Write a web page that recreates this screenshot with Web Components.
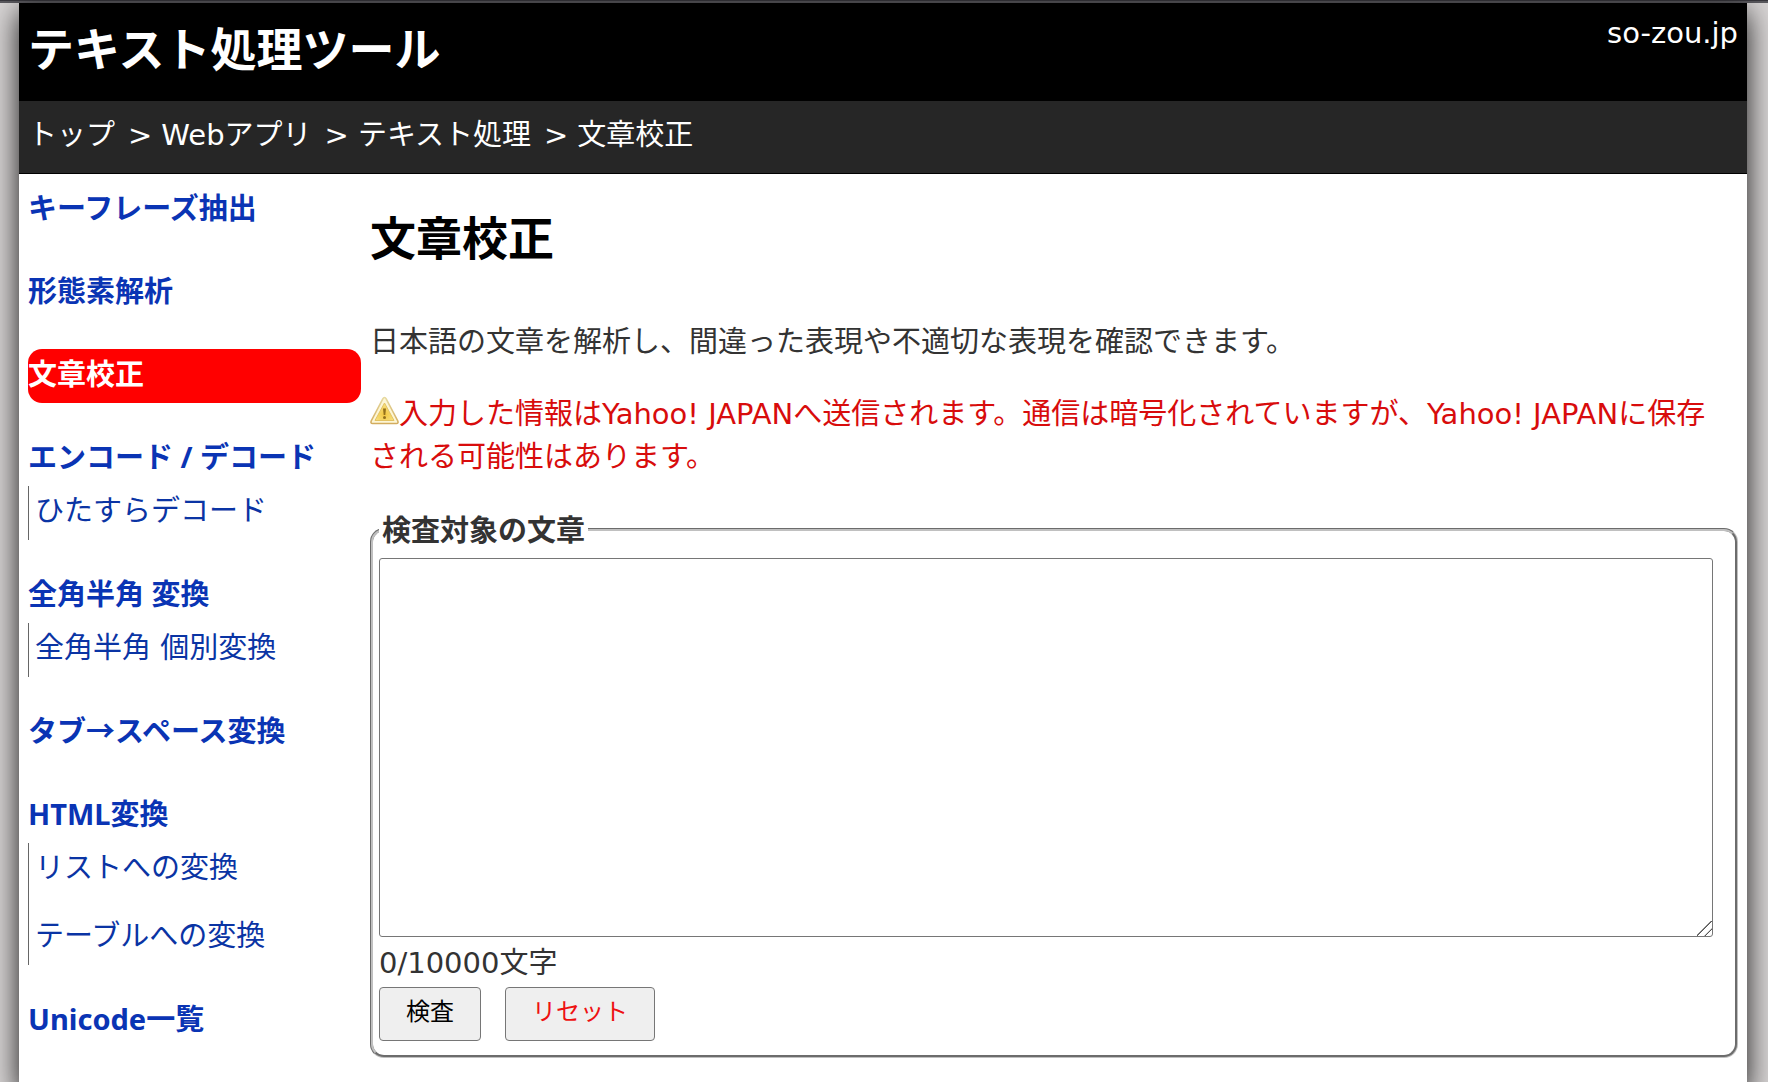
<!DOCTYPE html>
<html lang="ja">
<head>
<meta charset="utf-8">
<meta name="viewport" content="width=device-width, initial-scale=1">
<title>文章校正 - テキスト処理ツール</title>
<style>
  :root {
    --sans: "DejaVu Sans", "Noto Sans CJK JP", sans-serif;
    --strong: "Noto Sans", "Noto Sans CJK JP", sans-serif;
  }
  body {
    margin: 0;
    background: #d8d5d5;
    color: #333;
    font: 29px/43px var(--sans);
    overflow: hidden;
  }
</style>
</head>
<body>
<app-page>
  <site-header slot="header" home="so-zou.jp">テキスト処理ツール</site-header>
  <bread-crumb slot="header">
    <a href="#top">トップ</a>
    <a href="#web">Webアプリ</a>
    <a href="#text">テキスト処理</a>
    <a href="#proof">文章校正</a>
  </bread-crumb>
  <side-nav slot="side">
    <nav-group label="キーフレーズ抽出"></nav-group>
    <nav-group label="形態素解析"></nav-group>
    <nav-group label="文章校正" current></nav-group>
    <nav-group label="エンコード / デコード"><a href="#decode">ひたすらデコード</a></nav-group>
    <nav-group label="全角半角 変換"><a href="#width">全角半角 個別変換</a></nav-group>
    <nav-group label="タブ→スペース変換"></nav-group>
    <nav-group label="HTML変換"><a href="#list">リストへの変換</a><a href="#table">テーブルへの変換</a></nav-group>
    <nav-group label="Unicode一覧"></nav-group>
  </side-nav>
  <page-article heading="文章校正">
    <p>日本語の文章を解析し、間違った表現や不適切な表現を確認できます。</p>
    <warning-note>入力した情報はYahoo! JAPANへ送信されます。通信は暗号化されていますが、Yahoo! JAPANに保存される可能性はあります。</warning-note>
    <proof-form legend="検査対象の文章" max="10000"></proof-form>
  </page-article>
</app-page>

<script>
class Base extends HTMLElement {
  constructor() {
    super();
    this.attachShadow({ mode: 'open' });
  }
  connectedCallback() {
    this.shadowRoot.innerHTML = '<style>*{box-sizing:border-box}' + this.css() + '</style>' + this.html();
    this.ready();
  }
  ready() {}
}

customElements.define('app-page', class extends Base {
  css() { return `
    :host { display: block; border-top: 3px solid #5b5a5f; }
    .strip { height: 1px; margin-top: -3px; margin-bottom: 2px; background: #38373d; }
    .sheet { margin: 0 21px 0 19px; min-height: 100vh; background: #fff; box-shadow: 0 9px 28px rgba(0, 0, 0, .9); }
    .cols { display: flex; padding: 9px 9px 29px; gap: 9px; }
    .side { flex: 0 0 333px; }
    .main { flex: 1; min-width: 0; }`; }
  html() { return `<div class="strip"></div>
    <div class="sheet"><slot name="header"></slot>
    <div class="cols"><div class="side"><slot name="side"></slot></div><main class="main"><slot></slot></main></div></div>`; }
});

customElements.define('site-header', class extends Base {
  css() { return `
    :host { display: block; background: #000; }
    header { display: flex; justify-content: space-between; align-items: flex-start; height: 98px; padding: 9px 9px 0; }
    a { color: #fff; text-decoration: none; }
    .title { font: bold 46px/72px var(--strong); }`; }
  html() { return `<header><a class="title" href="#home"><slot></slot></a><a href="#site">${this.getAttribute('home')}</a></header>`; }
});

customElements.define('bread-crumb', class extends Base {
  css() { return `
    :host { display: block; background: #262626; border-bottom: 1px solid #000; color: #fff; }
    ol { display: flex; margin: 0; padding: 13px 9px 16px; list-style: none; }
    li + li::before { content: ">"; margin: 0 9px 0 13px; }
    ::slotted(a) { color: #fff; text-decoration: none; }`; }
  html() {
    return '<nav aria-label="パンくず"><ol>' + [...this.querySelectorAll('a')].map((a, i) => {
      a.slot = 'c' + i;
      return `<li><slot name="c${i}"></slot></li>`;
    }).join('') + '</ol></nav>';
  }
});

customElements.define('side-nav', class extends Base {
  css() { return `:host { display: block; } nav { display: flex; flex-direction: column; gap: 29px; }`; }
  html() { return `<nav><slot></slot></nav>`; }
});

customElements.define('nav-group', class extends Base {
  css() { return `
    :host { display: block; }
    .head { display: block; height: 54px; font: bold 29px/50px var(--strong); color: #0a34b4; text-decoration: none; white-space: nowrap; }
    :host([current]) .head { background: #f00; color: #fff; border-radius: 14px; }
    .subs { display: flex; flex-direction: column; gap: 14px; border-left: 1px solid #666; padding-left: 6px; }
    ::slotted(a) { height: 54px; line-height: 50px; color: #0a34a4; text-decoration: none; white-space: nowrap; }`; }
  html() { return `<a class="head" href="#item">${this.getAttribute('label')}</a>` +
    (this.children.length ? '<div class="subs"><slot></slot></div>' : ''); }
});

customElements.define('page-article', class extends Base {
  css() { return `
    :host { display: block; }
    h1 { margin: 19px 0 48px; font: bold 46px/71px var(--strong); color: #000; }
    ::slotted(p) { margin: 0 0 29px; }`; }
  html() { return `<h1>${this.getAttribute('heading')}</h1><slot></slot>`; }
});

customElements.define('warning-note', class extends Base {
  css() { return `
    :host { display: block; color: #d80c0c; margin-bottom: 29px; padding-right: 20px; }
    p { margin: 0; }
    svg { width: 29px; height: 29px; vertical-align: -1px; }`; }
  html() { return `<p><svg viewBox="0 0 29 29" role="img" aria-label="注意">
      <defs>
        <linearGradient id="e" x1="0" y1="0" x2="0" y2="1"><stop offset="0" stop-color="#e6d9a0"/><stop offset="1" stop-color="#d3ac5e"/></linearGradient>
        <radialGradient id="g" cx=".5" cy=".65" r=".6"><stop offset="0" stop-color="#f3c640"/><stop offset="1" stop-color="#f8e283"/></radialGradient>
      </defs>
      <path d="M14.500 1.500Q15.500 1.500 16.200 2.800L27.800 25Q28.600 27.500 26.500 27.500H2.500Q.4 27.500 1.200 25L12.800 2.800Q13.500 1.500 14.500 1.500Z" fill="#fdf6d5" stroke="url(#e)" stroke-width="1.600"/>
      <path d="M14.500 7L24 24.500H5Z" fill="url(#g)" stroke="#e3c262" stroke-width="1" stroke-linejoin="round"/>
      <path d="M13 12.500h3l-.7 6.500h-1.600z" fill="#94701c"/><circle cx="14.500" cy="21.500" r="1.500" fill="#94701c"/>
    </svg><slot></slot></p>`; }
});

customElements.define('proof-form', class extends Base {
  css() { return `
    :host { display: block; }
    fieldset { margin: 0; min-width: 0; padding: 7px 22px 14px 6px; border: 3px groove #c0c0c0; border-radius: 14px; }
    legend { padding: 0 3px; font: bold 29px/43px var(--strong); }
    textarea { display: block; width: 100%; height: 379px; padding: 6px; border: 1px solid #767676; border-radius: 3px; background: #fff; color: inherit; font: inherit; resize: both; outline: none; }
    textarea::-webkit-resizer { background: linear-gradient(135deg, transparent 46%, #555 47%, #555 52%, transparent 53%, transparent 73%, #555 74%, #555 79%, transparent 80%); }
    output { display: block; padding: 5px 0 2px; }
    .actions { display: flex; gap: 24px; }
    button { height: 54px; padding: 0 26px 5px; border: 1px solid #767676; border-radius: 4px; background: #efefef; color: #000; font: 24px/36px var(--sans); }
    button[type=reset] { color: #e11; }`; }
  html() { return `<form><fieldset>
      <legend><label for="t">${this.getAttribute('legend')}</label></legend>
      <textarea id="t" spellcheck="false"></textarea>
      <output for="t"></output>
      <div class="actions"><button type="submit">検査</button><button type="reset">リセット</button></div>
    </fieldset></form>`; }
  ready() {
    const $ = s => this.shadowRoot.querySelector(s);
    const count = () => { $('output').textContent = $('textarea').value.length + '/' + this.getAttribute('max') + '文字'; };
    $('textarea').addEventListener('input', count);
    $('form').addEventListener('reset', () => setTimeout(count));
    $('form').addEventListener('submit', e => e.preventDefault());
    count();
  }
});
</script>
</body>
</html>
